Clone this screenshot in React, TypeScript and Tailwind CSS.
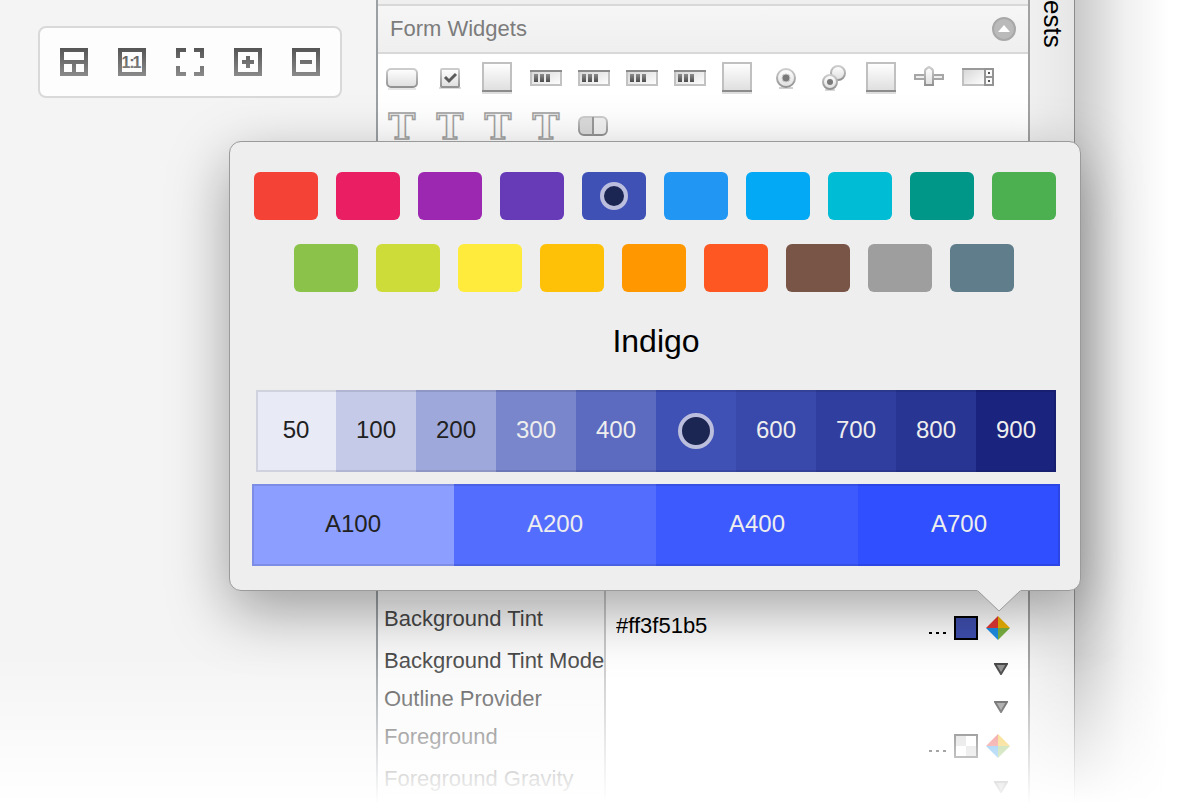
import { useState, type ReactNode } from "react";

const PRIMARY_ROWS = [
  [
    { name: "Red", bg: "bg-[#f44336]" },
    { name: "Pink", bg: "bg-[#e91e63]" },
    { name: "Purple", bg: "bg-[#9c27b0]" },
    { name: "Deep Purple", bg: "bg-[#673ab7]" },
    { name: "Indigo", bg: "bg-[#3f51b5]" },
    { name: "Blue", bg: "bg-[#2196f3]" },
    { name: "Light Blue", bg: "bg-[#03a9f4]" },
    { name: "Cyan", bg: "bg-[#00bcd4]" },
    { name: "Teal", bg: "bg-[#009688]" },
    { name: "Green", bg: "bg-[#4caf50]" },
  ],
  [
    { name: "Light Green", bg: "bg-[#8bc34a]" },
    { name: "Lime", bg: "bg-[#cddc39]" },
    { name: "Yellow", bg: "bg-[#ffeb3b]" },
    { name: "Amber", bg: "bg-[#ffc107]" },
    { name: "Orange", bg: "bg-[#ff9800]" },
    { name: "Deep Orange", bg: "bg-[#ff5722]" },
    { name: "Brown", bg: "bg-[#795548]" },
    { name: "Grey", bg: "bg-[#9e9e9e]" },
    { name: "Blue Grey", bg: "bg-[#607d8b]" },
  ],
];

const SHADES = [
  { name: "50", look: "bg-[#e8eaf6] text-[#212121]" },
  { name: "100", look: "bg-[#c5cae9] text-[#212121]" },
  { name: "200", look: "bg-[#9fa8da] text-[#212121]" },
  { name: "300", look: "bg-[#7986cb] text-[#eeeeee]" },
  { name: "400", look: "bg-[#5c6bc0] text-[#eeeeee]" },
  { name: "500", look: "bg-[#3f51b5] text-[#eeeeee]" },
  { name: "600", look: "bg-[#3949ab] text-[#eeeeee]" },
  { name: "700", look: "bg-[#303f9f] text-[#eeeeee]" },
  { name: "800", look: "bg-[#283593] text-[#eeeeee]" },
  { name: "900", look: "bg-[#1a237e] text-[#eeeeee]" },
];

const ACCENTS = [
  { name: "A100", look: "bg-[#8c9eff] text-[#212121]" },
  { name: "A200", look: "bg-[#536dfe] text-[#eeeeee]" },
  { name: "A400", look: "bg-[#3d5afe] text-[#eeeeee]" },
  { name: "A700", look: "bg-[#304ffe] text-[#eeeeee]" },
];

function Gradients() {
  return (
    <svg className="absolute size-0" aria-hidden="true">
      <defs>
        <linearGradient id="tool" gradientUnits="userSpaceOnUse" x1="0" y1="0" x2="0" y2="28">
          <stop offset="0" stopColor="#555" />
          <stop offset="1" stopColor="#8a8a8a" />
        </linearGradient>
        <linearGradient id="face" x1="0" y1="0" x2="0" y2="1">
          <stop offset="0" stopColor="#fff" />
          <stop offset="1" stopColor="#dedede" />
        </linearGradient>
        <linearGradient id="well" x1="0" y1="0" x2="1" y2="1">
          <stop offset="0" stopColor="#d6d6d6" />
          <stop offset="1" stopColor="#fff" />
        </linearGradient>
        <linearGradient id="edge" x1="0" y1="0" x2="0" y2="1">
          <stop offset="0" stopColor="#cdcdcd" />
          <stop offset="1" stopColor="#929292" />
        </linearGradient>
        <linearGradient id="bar" x1="0" y1="0" x2="0" y2="1">
          <stop offset="0" stopColor="#8c8c8c" />
          <stop offset="1" stopColor="#4c4c4c" />
        </linearGradient>
      </defs>
    </svg>
  );
}

const FRAME = "M0 0H28V28H0ZM4 4V24H24V4Z";

const TOOLS: { label: string; art: ReactNode }[] = [
  { label: "Viewport mode", art: <path fillRule="evenodd" d="M0 0H28V28H0ZM4 4V12H24V4ZM4 16V24H12V16ZM16 16V24H24V16Z" /> },
  {
    label: "Actual size",
    art: (
      <>
        <path fillRule="evenodd" d={FRAME} />
        <text y="20" textAnchor="middle" fontSize="16" fontWeight="bold" fontFamily="Liberation Sans, sans-serif">
          <tspan x="8">1</tspan>
          <tspan x="14">:</tspan>
          <tspan x="19">1</tspan>
        </text>
      </>
    ),
  },
  { label: "Zoom to fit", art: <path d="M0 0H10V4H4V10H0ZM18 0H28V10H24V4H18ZM0 18H4V24H10V28H0ZM24 18H28V28H18V24H24Z" /> },
  { label: "Zoom in", art: <path fillRule="evenodd" d="M0 0H28V28H0ZM4 4V24H24V4ZM12 8H16V12H20V16H16V20H12V16H8V12H12Z" /> },
  { label: "Zoom out", art: <path fillRule="evenodd" d="M0 0H28V28H0ZM4 4V24H24V4ZM8 12H20V16H8Z" /> },
];

const buttonArt = (
  <>
    <path d="M10 35H38" stroke="#e6e6e6" strokeWidth="2" />
    <rect x="9" y="15" width="30" height="18" rx="4" fill="url(#face)" stroke="url(#edge)" strokeWidth="2" />
  </>
);
const checkArt = (
  <>
    <path d="M13 34H35" stroke="#dcdcdc" strokeWidth="2" />
    <rect x="15" y="15" width="18" height="18" rx="1" fill="url(#face)" stroke="url(#edge)" strokeWidth="2" />
    <path d="M19 23L23 27L30 20" fill="none" stroke="#5c5c5c" strokeWidth="3" />
  </>
);
const boxArt = (
  <>
    <path d="M8 39H38" stroke="#dedede" strokeWidth="2" />
    <rect x="9" y="9" width="28" height="28" fill="url(#face)" stroke="#c0c0c0" strokeWidth="2" />
    <path d="M8 37H38" stroke="#8c8c8c" strokeWidth="2" />
  </>
);
const progressArt = (
  <>
    <rect x="9" y="17" width="30" height="14" fill="url(#well)" stroke="#c2c2c2" strokeWidth="2" />
    <path d="M8 17H40" stroke="#8a8a8a" strokeWidth="2" />
    <path d="M12 20H16V28H12ZM18 20H22V28H18ZM24 20H28V28H24Z" fill="url(#bar)" />
  </>
);
const radioArt = (
  <>
    <path d="M17 34H31" stroke="#d0d0d0" strokeWidth="2" />
    <circle cx="24" cy="24" r="9" fill="url(#face)" stroke="url(#edge)" strokeWidth="2" />
    <circle cx="24" cy="24" r="4" fill="#7a7a7a" stroke="#c8c8c8" strokeWidth="1" />
  </>
);
const radioGroupArt = (
  <>
    <circle cx="28" cy="19" r="7" fill="url(#face)" stroke="url(#edge)" strokeWidth="2" />
    <path d="M15 36H25" stroke="#d8d8d8" strokeWidth="2" />
    <circle cx="20" cy="28" r="7" fill="url(#face)" stroke="url(#edge)" strokeWidth="2" />
    <circle cx="20" cy="28" r="3" fill="#7a7a7a" />
  </>
);
const seekArt = (
  <>
    <rect x="9" y="21" width="28" height="4" fill="#eee" stroke="#a6a6a6" strokeWidth="2" />
    <path d="M19 31V17Q19 15 23 13Q27 15 27 17V31Z" fill="url(#face)" stroke="url(#edge)" strokeWidth="2" />
  </>
);
const spinnerArt = (
  <>
    <rect x="9" y="15" width="22" height="16" fill="url(#well)" stroke="#c0c0c0" strokeWidth="2" />
    <path d="M8 15H30" stroke="#9a9a9a" strokeWidth="2" />
    <path d="M31 15H39V31H31ZM31 23H39" fill="#fafafa" stroke="#949494" strokeWidth="2" />
    <path d="M34 18H36V20H34ZM34 26H36V28H34Z" fill="#555" />
  </>
);
const textArt = (
  <text
    x="24"
    y="37"
    textAnchor="middle"
    fontSize="36"
    fontWeight="bold"
    fontFamily="DejaVu Serif, serif"
    fill="#fbfbfb"
    stroke="#a2a2a2"
    strokeWidth="1.5"
  >
    T
  </text>
);
const toggleArt = (
  <>
    <rect x="9" y="15" width="28" height="18" rx="5" fill="#f2f2f2" />
    <path d="M23 15H14Q9 15 9 20V28Q9 33 14 33H23Z" fill="#dcdcdc" />
    <rect x="9" y="15" width="28" height="18" rx="5" fill="none" stroke="url(#edge)" strokeWidth="2" />
    <path d="M23 15V33" stroke="#9a9a9a" strokeWidth="2" />
  </>
);

const WIDGETS: { label: string; art: ReactNode }[] = [
  { label: "Button", art: buttonArt },
  { label: "CheckBox", art: checkArt },
  { label: "CheckedTextView", art: boxArt },
  { label: "ProgressBar Large", art: progressArt },
  { label: "ProgressBar Normal", art: progressArt },
  { label: "ProgressBar Small", art: progressArt },
  { label: "ProgressBar Horizontal", art: progressArt },
  { label: "QuickContactBadge", art: boxArt },
  { label: "RadioButton", art: radioArt },
  { label: "RadioGroup", art: radioGroupArt },
  { label: "RatingBar", art: boxArt },
  { label: "SeekBar", art: seekArt },
  { label: "Spinner", art: spinnerArt },
  { label: "Text Large", art: textArt },
  { label: "Text Medium", art: textArt },
  { label: "Text Small", art: textArt },
  { label: "TextView", art: textArt },
  { label: "ToggleButton", art: toggleArt },
];

function PaletteIcon({ faded }: { faded?: boolean }) {
  return (
    <svg viewBox="0 0 24 24" className={faded ? "size-6 opacity-85" : "size-6"} aria-hidden="true">
      <path d="M12 0V12H0Z" fill="#e53935" />
      <path d="M12 0V12H24Z" fill="#f0b400" />
      <path d="M12 24V12H0Z" fill="#1e90e8" />
      <path d="M12 24V12H24Z" fill="#7cb342" />
    </svg>
  );
}

function ColorTools({ name, set }: { name: string; set?: boolean }) {
  return (
    <div className="flex items-center justify-end gap-2 pr-4.5">
      <button type="button" aria-label={`Browse ${name}`} className="flex h-6 items-end gap-1 pb-1.5">
        <i className="h-0.5 w-[3px] bg-black" />
        <i className="h-0.5 w-[3px] bg-black" />
        <i className="h-0.5 w-[3px] bg-black" />
      </button>
      <button
        type="button"
        aria-label={`${name} color`}
        className={set ? "size-6 border-2 border-black bg-[#3f4fb0]" : "grid size-6 grid-cols-2 border-2 border-[#3a3a3a] bg-white"}
      >
        {!set && (
          <>
            <i className="h-2.5 bg-[#d2d2d2]" />
            <i className="h-2.5" />
            <i className="h-2.5" />
            <i className="h-2.5 bg-[#d2d2d2]" />
          </>
        )}
      </button>
      <button type="button" aria-label={`${name} palette`}>
        <PaletteIcon faded={!set} />
      </button>
    </div>
  );
}

function DropArrow({ name }: { name: string }) {
  return (
    <div className="flex justify-end pr-5 pt-0.5">
      <button type="button" aria-label={`${name} options`}>
        <svg viewBox="0 0 14 12" className="h-3 w-3.5" aria-hidden="true">
          <path d="M1 1H13L7 11Z" fill="#8a8a8a" stroke="#3c3c3c" strokeWidth="2" />
        </svg>
      </button>
    </div>
  );
}

function PropertyRow({ name, tall, children }: { name: string; tall?: boolean; children: ReactNode }) {
  return (
    <tr className={tall ? "h-[42px]" : "h-[38px]"}>
      <th
        scope="row"
        className="w-[228px] whitespace-nowrap border-r-2 border-[#c9c9c9] bg-[#fafafa] pl-1.5 pt-1 text-left align-top text-[22px] font-normal leading-[30px] text-[#484848]"
      >
        {name}
      </th>
      <td className="bg-white pt-3.5 align-middle">{children}</td>
    </tr>
  );
}

function ColorPopover() {
  const [color, setColor] = useState("Indigo");
  const [shade, setShade] = useState("500");

  return (
    <div
      role="dialog"
      aria-label="Material palette"
      className="absolute -right-[53px] -top-[9px] z-20 w-[852px] rounded-xl border border-[#9a9a9a] bg-[#eeeeee] pb-6 pl-[22px] pr-5 pt-[30px] shadow-[0_20px_60px_rgba(0,0,0,0.36)]"
    >
      <div className="flex flex-col gap-6">
        {PRIMARY_ROWS.map((row, i) => (
          <div key={i} className={i === 0 ? "flex gap-4.5 pl-0.5" : "flex gap-4.5 pl-[42px]"}>
            {row.map((c) => (
              <button
                key={c.name}
                type="button"
                aria-label={c.name}
                onClick={() => setColor(c.name)}
                className={`flex h-12 w-16 items-center justify-center rounded-md ${c.bg}`}
              >
                {color === c.name && <span className="size-7 rounded-full border-4 border-[#bcbedd] bg-[#1c2653]" />}
              </button>
            ))}
          </div>
        ))}
      </div>
      <h2 className="text-center text-[32px] leading-[98px] text-black">{color}</h2>
      <div className="relative mx-1 mb-3 grid h-[82px] grid-cols-10">
        {SHADES.map((s) => (
          <button
            key={s.name}
            type="button"
            aria-label={s.name}
            onClick={() => setShade(s.name)}
            className={`flex items-center justify-center text-2xl ${s.look}`}
          >
            {shade === s.name ? (
              <span className="size-9 rounded-full border-4 border-[#bcbedd] bg-[#1c2653]" />
            ) : (
              <span className="pb-0.5">{s.name}</span>
            )}
          </button>
        ))}
        <span className="pointer-events-none absolute inset-0 border-2 border-black/10" />
      </div>
      <div className="relative grid h-[82px] grid-cols-4">
        {ACCENTS.map((a) => (
          <button
            key={a.name}
            type="button"
            onClick={() => setShade(a.name)}
            className={`flex items-center justify-center text-2xl ${a.look}`}
          >
            <span className="pb-0.5">{a.name}</span>
          </button>
        ))}
        <span className="pointer-events-none absolute inset-0 border-2 border-black/10" />
      </div>
      <svg viewBox="0 0 44 22" className="absolute right-[59px] top-full h-[22px] w-11" aria-hidden="true">
        <path d="M0 0H44L22 21Z" fill="#eeeeee" />
        <path d="M1 1L22 21L43 1" fill="none" stroke="#9a9a9a" strokeWidth="1" />
      </svg>
    </div>
  );
}

export default function App() {
  return (
    <div className="relative flex min-h-screen overflow-hidden bg-white font-['Liberation_Sans',Arial,sans-serif]">
      <Gradients />
      <aside className="w-94 shrink-0 bg-[#f4f4f4] pl-[38px] pt-[26px]">
        <div role="toolbar" aria-label="Canvas" className="inline-flex gap-[30px] rounded-lg border-2 border-[#d9d9d9] bg-[#fdfdfd] p-5">
          {TOOLS.map((t) => (
            <button key={t.label} type="button" aria-label={t.label}>
              <svg viewBox="0 0 28 28" className="size-7" fill="url(#tool)" aria-hidden="true">
                {t.art}
              </svg>
            </button>
          ))}
        </div>
      </aside>

      <main className="min-w-0 flex-1 border-l-2 border-r-2 border-l-[#9ba0a4] border-r-[#a2a2a2] bg-white">
        <div className="h-1 bg-[#efefef]" />
        <header className="flex h-[50px] items-center justify-between border-y-2 border-[#d8d8d8] bg-linear-to-b from-[#f6f6f6] to-[#efefef] px-3">
          <h1 className="text-[22px] leading-7 text-[#7c7c7c]">Form Widgets</h1>
          <button type="button" aria-label="Collapse section">
            <svg viewBox="0 0 24 24" className="size-6" aria-hidden="true">
              <circle cx="12" cy="12" r="11" fill="#bababa" stroke="#a8a8a8" strokeWidth="2" />
              <path d="M6 15H18L12 8Z" fill="#fff" />
            </svg>
          </button>
        </header>
        <section aria-label="Form widgets" className="flex flex-wrap">
          {WIDGETS.map((w) => (
            <button key={w.label} type="button" aria-label={w.label} className="size-12">
              <svg viewBox="0 0 48 48" className="size-12" aria-hidden="true">
                {w.art}
              </svg>
            </button>
          ))}
        </section>

        <div className="relative h-[450px]">
          <div className="h-full w-[228px] border-r-2 border-[#c9c9c9]" />
          <ColorPopover />
        </div>

        <table className="w-full table-fixed border-separate border-spacing-0">
          <tbody>
            <PropertyRow name="Background Tint" tall>
              <div className="flex items-center justify-between">
                <input
                  aria-label="Background Tint value"
                  defaultValue="#ff3f51b5"
                  className="h-6 w-40 min-w-0 bg-transparent pb-1 pl-2.5 text-[22px] leading-5 text-black outline-none"
                />
                <ColorTools name="Background Tint" set />
              </div>
            </PropertyRow>
            <PropertyRow name="Background Tint Mode">
              <DropArrow name="Background Tint Mode" />
            </PropertyRow>
            <PropertyRow name="Outline Provider">
              <DropArrow name="Outline Provider" />
            </PropertyRow>
            <PropertyRow name="Foreground" tall>
              <ColorTools name="Foreground" />
            </PropertyRow>
            <PropertyRow name="Foreground Gravity">
              <DropArrow name="Foreground Gravity" />
            </PropertyRow>
          </tbody>
        </table>
      </main>

      <nav className="w-[45px] shrink-0 border-r border-[#8c8c8c] bg-linear-to-r from-[#f0f0f0] to-[#e6e6e6]">
        <button type="button" className="flex h-12 w-11 items-center whitespace-nowrap text-[26px] text-black [writing-mode:vertical-rl]">
          ests
        </button>
      </nav>
      <div className="w-[111px] shrink-0 bg-linear-to-r from-[#cacaca] via-[#f0f0f0] via-45% to-white to-85%" />

      <div className="pointer-events-none absolute inset-x-0 bottom-0 z-10 h-[150px] bg-linear-to-b from-transparent to-white" />
    </div>
  );
}
